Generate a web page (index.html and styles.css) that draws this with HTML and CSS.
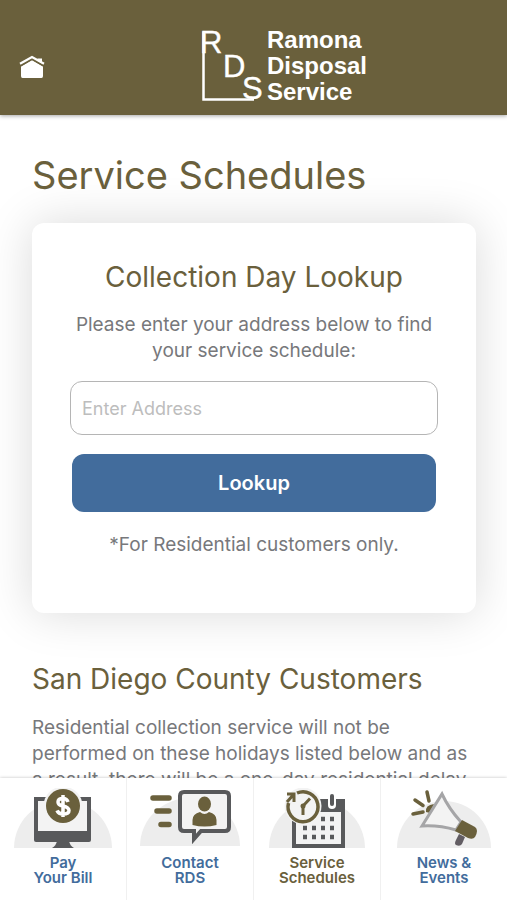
FILE: index.html
```html
<!DOCTYPE html>
<html lang="en">
<head>
    <meta charset="UTF-8">
    <meta name="viewport" content="width=device-width, initial-scale=1.0">
    <title>Service Schedules</title>
    <link rel="stylesheet" href="styles.css">
</head>
<body>
<header class="header">
    <a class="home-link" href="#" aria-label="Home">
        <svg width="26" height="24" viewBox="0 0 26 24">
            <path d="M13 6 24 12.500V22Q24 24 22.500 24H3.500Q2 24 2 22V12.500Z" fill="#fff"/>
            <path d="M18.500 4.500h4.500v5l-4.500-2.500z" fill="#fff"/>
            <path d="M1.500 11.800 13 5.400 24.500 11.800" fill="none" stroke="#6a603c" stroke-width="1.400"/>
            <path d="M1 9.800 13 3 25 9.800" fill="none" stroke="#fff" stroke-width="2.200"/>
        </svg>
    </a>
    <a class="logo" href="#">
        <svg class="logo-mark" width="65" height="74" viewBox="0 0 65 74">
            <path d="M3.500 2.500V70.500H54" fill="none" stroke="#fff" stroke-width="2.500"/>
            <text class="logo-letter" x="0" y="24">R</text>
            <text class="logo-letter" x="23" y="48">D</text>
            <text class="logo-letter" x="42" y="70">S</text>
        </svg>
        <span class="logo-name">Ramona<br>Disposal<br>Service</span>
    </a>
</header>

<main class="content">
    <h1>Service Schedules</h1>
    <form class="card">
        <h2>Collection Day Lookup</h2>
        <label for="address">Please enter your address below to find your service schedule:</label>
        <input type="text" id="address" placeholder="Enter Address">
        <button type="submit">Lookup</button>
        <p>*For Residential customers only.</p>
    </form>
    <h2>San Diego County Customers</h2>
    <p>Residential collection service will not be performed on these holidays listed below and as a result, there will be a one-day residential delay</p>
</main>

<nav class="tabs">
    <a class="tab" href="#">
        <svg class="tab-icon" viewBox="0 0 100 62">
            <path d="M1 60a49 48 0 0 1 98 0z" fill="#ededed"/>
            <path d="M23 11H76V48H23z" fill="#f3f3f3" stroke="#58595b" stroke-width="4"/>
            <path d="M21 43H78V52Q78 54 76 54H23Q21 54 21 52z" fill="#58595b"/>
            <path d="M44 53H56Q57 58 61 60H39Q43 58 44 53z" fill="#58595b"/>
            <circle cx="50" cy="18" r="19.500" fill="#f3f3f3"/>
            <circle cx="50" cy="18" r="17" fill="#6a603c"/>
            <path d="M55 14Q54 10.500 50 10.500Q45 10.500 45 14Q45 17 50 18Q56 19.500 56 22.500Q56 26 50 26Q45.500 26 44 22.500M50 7v22" fill="none" stroke="#fff" stroke-width="3.500"/>
        </svg>
        <span>Pay<br>Your Bill</span>
    </a>
    <a class="tab" href="#">
        <svg class="tab-icon" viewBox="0 0 100 62">
            <path d="M0 58a50 48 0 0 1 100 0z" fill="#ededed"/>
            <path d="M13 10H29M17 23H29M21 36.500H29" stroke="#6a603c" stroke-width="5.500" stroke-linecap="round"/>
            <path d="M44 4H85Q89 4 89 8V39Q89 43 85 43H61L54 51V43H44Q40 43 40 39V8Q40 4 44 4z" fill="#f3f3f3" stroke="#58595b" stroke-width="4"/>
            <ellipse cx="64.500" cy="16" rx="6.500" ry="7.500" fill="#6a603c"/>
            <path d="M52.500 37V32Q52.500 26 60 24Q64.500 28 69 24Q76.500 26 76.500 32V37Q64.500 40 52.500 37z" fill="#6a603c"/>
        </svg>
        <span>Contact<br>RDS</span>
    </a>
    <a class="tab tab-active" href="#">
        <svg class="tab-icon" viewBox="0 0 100 62">
            <path d="M2 60a48 48 0 0 1 96 0z" fill="#ededed"/>
            <path d="M27 17H76V58H27z" fill="#f3f3f3" stroke="#58595b" stroke-width="4"/>
            <path d="M52 11H78V24H52z" fill="#58595b"/>
            <path d="M65 7V17" stroke="#fff" stroke-width="8" stroke-linecap="round"/>
            <path d="M65 8V16" stroke="#58595b" stroke-width="4" stroke-linecap="round"/>
            <path d="M54 31h4M63 31h4M36 40h4M45 40h4M54 40h4M63 40h4M36 49h4M45 49h4M54 49h4M63 49h4" stroke="#58595b" stroke-width="4.500"/>
            <circle cx="36" cy="18" r="18.500" fill="#f3f3f3"/>
            <path d="M30 5A15 15 0 1 1 21.500 15" fill="none" stroke="#6a603c" stroke-width="3.500"/>
            <path d="M20 6h7v8M27 6l-7 8" fill="none" stroke="#6a603c" stroke-width="3"/>
            <path d="M43 10.500 36 18V27" fill="none" stroke="#6a603c" stroke-width="3"/>
            <circle cx="36" cy="18" r="2.500" fill="#6a603c"/>
        </svg>
        <span>Service<br>Schedules</span>
    </a>
    <a class="tab" href="#">
        <svg class="tab-icon" viewBox="0 0 100 62">
            <path d="M3 60a47 47 0 0 1 94 0z" fill="#ededed"/>
            <path d="M33 4 35 13M21 12 29 17.500M19 26 29 24" stroke="#6a603c" stroke-width="3.500" stroke-linecap="round"/>
            <path d="M40 16Q31 17 32 24L36 25z" fill="#6a603c"/>
            <path d="M48 6Q55 21 67 34L62 42Q45 37 28 38Z" fill="#f3f3f3" stroke="#a5a5a7" stroke-width="3"/>
            <path d="M68 32 81 39Q85 42 81 49Q79 52 74 50L61 43Z" fill="#6a603c"/>
            <path d="M65 46 71 49 68 56Q66 59 62 57Q60 56 62 52z" fill="#625d63"/>
        </svg>
        <span>News &amp;<br>Events</span>
    </a>
</nav>
</body>
</html>
```

FILE: styles.css
```css
* {
    box-sizing: border-box;
}

body {
    display: flex;
    flex-direction: column;
    height: 100vh;
    margin: 0;
    background-color: #fff;
    color: #77787b;
    font-family: Inter, "Liberation Sans", sans-serif;
    font-size: 19px;
    line-height: 26px;
}

a {
    text-decoration: none;
}

.header {
    display: grid;
    grid-template-columns: 1fr auto 1fr;
    align-items: center;
    padding: 27px 19px 10px;
    background-color: #6a603c;
    box-shadow: 0 1px 4px rgba(0, 0, 0, 0.35);
    z-index: 1;
}

.home-link {
    display: flex;
}

.logo {
    display: flex;
    align-items: center;
    gap: 2px;
    margin-left: 60px;
    color: #fff;
}

.logo-mark {
    flex: none;
}

.logo-letter {
    fill: #fff;
    stroke: #fff;
    stroke-width: 0.4px;
    font-family: "Liberation Sans", Arial, sans-serif;
    font-size: 31px;
}

.logo-name {
    font-family: "Liberation Sans", Arial, sans-serif;
    font-size: 24px;
    font-weight: bold;
    line-height: 26px;
}

.content {
    flex: 1;
    min-height: 0;
    padding: 36px 31px 0 32px;
    overflow-y: auto;
    scrollbar-width: none;
}

h1, h2 {
    margin: 0;
    color: #6a603c;
    font-weight: 400;
}

h1 {
    font-size: 38px;
    line-height: 48px;
}

h2 {
    font-size: 28px;
    line-height: 36px;
}

p {
    margin: 18px 0 0;
}

.card {
    display: flex;
    flex-direction: column;
    margin: 24px 0 48px;
    padding: 36px 40px 55px;
    border-radius: 12px;
    background-color: #fff;
    box-shadow: 0 0 48px rgba(0, 0, 0, 0.15);
    text-align: center;
}

.card label {
    margin: 17px 0;
}

.card p {
    margin-top: 20px;
}

.card input {
    height: 54px;
    margin: 0 -2px 19px;
    padding: 0 11px;
    border: 1px solid #b5b5b5;
    border-radius: 12px;
    font: inherit;
    font-size: 18px;
}

.card input::placeholder {
    color: #bdbdbd;
}

.card button {
    height: 58px;
    border: none;
    border-radius: 12px;
    background-color: #426c9c;
    color: #fff;
    font: inherit;
    font-size: 20px;
    font-weight: 600;
    cursor: pointer;
}

.tabs {
    display: flex;
    background-color: #fff;
    box-shadow: 0 0 3px rgba(0, 0, 0, 0.25);
    z-index: 1;
}

.tab {
    display: flex;
    flex: 1;
    flex-direction: column;
    align-items: center;
    gap: 5px;
    padding: 10px 0 15px;
    border-right: 1px solid #f0f0f0;
    color: #426c9c;
    font-size: 15px;
    font-weight: 600;
    line-height: 15px;
    text-align: center;
}

.tab:last-child {
    border-right: none;
}

.tab-active {
    color: #6a603c;
}

.tab-icon {
    width: 100px;
    height: 62px;
}
```
